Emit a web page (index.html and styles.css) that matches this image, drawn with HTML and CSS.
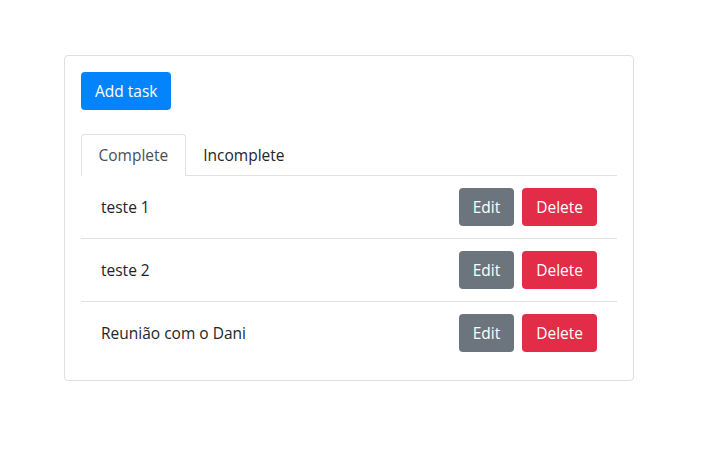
FILE: index.html
```html
<!DOCTYPE html>
<html>
<head>
<meta charset="utf-8">
<link rel="stylesheet" href="styles.css">
</head>
<body>
<div class="card">
  <div class="card-body">
    <button class="btn btn-primary">Add task</button>
    <ul class="nav-tabs">
      <li class="nav-link active">Complete</li>
      <li class="nav-link">Incomplete</li>
    </ul>
    <ul class="list">
      <li class="item"><span>teste 1</span><div class="actions"><button class="btn btn-secondary">Edit</button><button class="btn btn-danger">Delete</button></div></li>
      <li class="item"><span>teste 2</span><div class="actions"><button class="btn btn-secondary">Edit</button><button class="btn btn-danger">Delete</button></div></li>
      <li class="item"><span>Reunião com o Dani</span><div class="actions"><button class="btn btn-secondary">Edit</button><button class="btn btn-danger">Delete</button></div></li>
    </ul>
  </div>
</div>
</body>
</html>
```
FILE: styles.css
```css
* { box-sizing: border-box; }
body {
  margin: 0;
  font-family: "Open Sans", "Liberation Sans", Arial, sans-serif;
  font-size: 15.5px;
  line-height: 24px;
  color: #212529;
  background: #fff;
}
.card {
  margin: 55px 0 0 64px;
  width: 570px;
  border: 1px solid #dfdfdf;
  border-radius: 4px;
}
.card-body { padding: 16px; }
.btn {
  font-family: inherit;
  font-size: 15.5px;
  line-height: 24px;
  padding: 7px 14px;
  border: 0;
  border-radius: 4px;
  color: #fff;
  display: inline-block;
}
.btn-primary { background: #0384fc; }
.btn-secondary { background: #6c757d; }
.btn-danger { background: #e22c48; }
.nav-tabs {
  list-style: none;
  margin: 24px 0 0;
  padding: 0;
  display: flex;
  border-bottom: 1px solid #dee2e6;
}
.nav-link {
  padding: 8px 16.5px;
  margin-bottom: -1px;
  border: 1px solid transparent;
  border-radius: 4px 4px 0 0;
  color: #212529;
}
.nav-link.active {
  color: #495057;
  border-color: #dee2e6 #dee2e6 #fff;
  background: #fff;
}
.list { list-style: none; margin: 0; padding: 0; }
.item {
  display: flex;
  align-items: center;
  justify-content: space-between;
  padding: 12px 20px;
  border-bottom: 1px solid #dee2e6;
}
.item:last-child { border-bottom: 0; }
.actions { display: flex; gap: 8px; }
```
